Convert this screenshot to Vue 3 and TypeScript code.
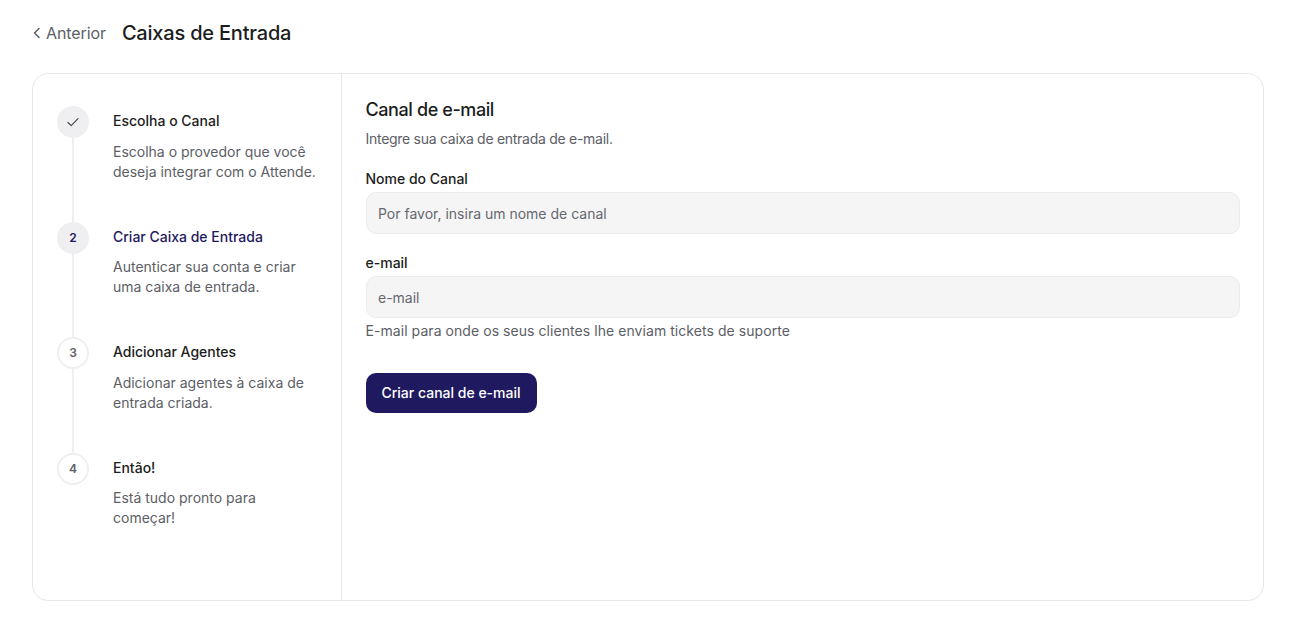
<script setup lang="ts">
interface Step {
  mark: string;
  title: string;
  desc: string[];
  state: 'done' | 'active' | 'todo';
}

const steps: Step[] = [
  { mark: '', title: 'Escolha o Canal', desc: ['Escolha o provedor que você', 'deseja integrar com o Attende.'], state: 'done' },
  { mark: '2', title: 'Criar Caixa de Entrada', desc: ['Autenticar sua conta e criar', 'uma caixa de entrada.'], state: 'active' },
  { mark: '3', title: 'Adicionar Agentes', desc: ['Adicionar agentes à caixa de', 'entrada criada.'], state: 'todo' },
  { mark: '4', title: 'Então!', desc: ['Está tudo pronto para', 'começar!'], state: 'todo' },
];
</script>

<template>
  <div class="page">
    <header class="head">
      <a class="back">
        <svg width="10" height="12" viewBox="0 0 10 12" fill="none">
          <path d="M7 1.5 2.5 6 7 10.5" stroke="#5c5e66" stroke-width="1.5" stroke-linecap="round" stroke-linejoin="round" />
        </svg>
        <span>Anterior</span>
      </a>
      <h1 class="title">Caixas de Entrada</h1>
    </header>

    <main class="card">
      <aside class="steps">
        <div v-for="(s, i) in steps" :key="s.title" class="step" :class="[s.state, { last: i === steps.length - 1 }]">
          <div class="marker">
            <svg v-if="s.state === 'done'" width="14" height="14" viewBox="0 0 14 14" fill="none">
              <path d="M2 7.5 5.2 10.7 12 3.6" stroke="#4a4b52" stroke-width="1.2" stroke-linecap="round" stroke-linejoin="round" />
            </svg>
            <span v-else class="num">{{ s.mark }}</span>
          </div>
          <div class="body">
            <div class="step-title">{{ s.title }}</div>
            <p class="step-desc"><span v-for="l in s.desc" :key="l" class="line">{{ l }}</span></p>
          </div>
        </div>
      </aside>

      <section class="form">
        <h2 class="form-title">Canal de e-mail</h2>
        <p class="form-sub">Integre sua caixa de entrada de e-mail.</p>

        <label class="field first">
          <span class="label">Nome do Canal</span>
          <input class="input" type="text" placeholder="Por favor, insira um nome de canal" />
        </label>

        <label class="field second">
          <span class="label">e-mail</span>
          <input class="input" type="text" placeholder="e-mail" />
          <span class="help">E-mail para onde os seus clientes lhe enviam tickets de suporte</span>
        </label>

        <button class="submit" type="button">Criar canal de e-mail</button>
      </section>
    </main>
  </div>
</template>

<style>
html, body { margin: 0; background: #ffffff; }
</style>

<style scoped>
.page {
  width: 1293px;
  height: 627px;
  box-sizing: border-box;
  padding: 16px 29px 26px 32px;
  display: flex;
  flex-direction: column;
  font-family: Inter, "Liberation Sans", sans-serif;
  color: #1c1d20;
  overflow: hidden;
}
.head {
  height: 34px;
  display: flex;
  align-items: center;
  gap: 16px;
  margin-bottom: 23px;
}
.back {
  display: flex;
  align-items: center;
  gap: 4px;
  font-size: 16px;
  letter-spacing: -0.1px;
  color: #5c5e66;
}
.title {
  margin: 0;
  font-size: 20px;
  font-weight: 500;
  line-height: 28px;
  letter-spacing: -0.2px;
  color: #1c1d20;
}
.card {
  flex: 1;
  display: flex;
  border: 1px solid #e8e8ea;
  border-radius: 16px;
  min-height: 0;
}
.steps {
  width: 309px;
  flex: none;
  box-sizing: border-box;
  padding: 32px 16px 0 24px;
  border-right: 1px solid #e8e8ea;
}
.step {
  display: flex;
  gap: 24px;
  height: 115.5px;
  position: relative;
}
.step::before {
  content: "";
  position: absolute;
  left: 15px;
  top: 32px;
  bottom: 0;
  width: 2px;
  background: #efeff1;
}
.step.last::before { display: none; }
.marker {
  width: 32px;
  height: 32px;
  flex: none;
  box-sizing: border-box;
  border-radius: 50%;
  display: flex;
  align-items: center;
  justify-content: center;
  font-size: 12px;
  font-weight: 600;
  background: #ffffff;
  border: 2px solid #efeff1;
  color: #5c5e66;
}
.num { padding-bottom: 0.8px; }
.done .marker, .active .marker { background: #efeff1; }
.active .marker { color: #1f1a60; }
.body { padding-top: 5px; min-width: 0; }
.step-title {
  font-size: 14px;
  line-height: 20px;
  font-weight: 500;
  color: #1c1d20;
}
.active .step-title { color: #1f1a60; }
.step-desc {
  margin: 10.6px 0 0;
  font-size: 14px;
  line-height: 20px;
  color: #5c5e66;
}
.line { display: block; white-space: nowrap; }
.form {
  flex: 1;
  min-width: 0;
  box-sizing: border-box;
  padding: 23px 23px 0 23.5px;
}
.form-title {
  margin: 0;
  font-size: 18px;
  line-height: 26px;
  font-weight: 500;
  letter-spacing: -0.4px;
  color: #1c1d20;
}
.form-sub {
  margin: 6px 0 0;
  font-size: 14px;
  line-height: 20px;
  letter-spacing: -0.28px;
  color: #5c5e66;
}
.field { display: block; }
.first { margin-top: 20px; }
.second { margin-top: 19px; }
.label {
  display: block;
  font-size: 14px;
  line-height: 20px;
  font-weight: 500;
  color: #1c1d20;
  margin-bottom: 3px;
}
.input {
  display: block;
  width: 100%;
  height: 42px;
  box-sizing: border-box;
  border: 1px solid #ececee;
  border-radius: 10px;
  background: #f5f5f5;
  padding: 0 11.5px;
  font: 400 14px Inter, "Liberation Sans", sans-serif;
  color: #1c1d20;
  outline: none;
}
.input::placeholder { color: #66686f; opacity: 1; }
.help {
  display: block;
  margin-top: 3px;
  font-size: 14px;
  line-height: 20px;
  letter-spacing: 0.06px;
  color: #5c5e66;
}
.submit {
  display: block;
  margin-top: 32px;
  width: 171px;
  height: 40px;
  border: 0;
  border-radius: 10px;
  background: #1f1a60;
  color: #ffffff;
  font: 500 14px Inter, "Liberation Sans", sans-serif;
  padding: 0 0 1px;
}
</style>
